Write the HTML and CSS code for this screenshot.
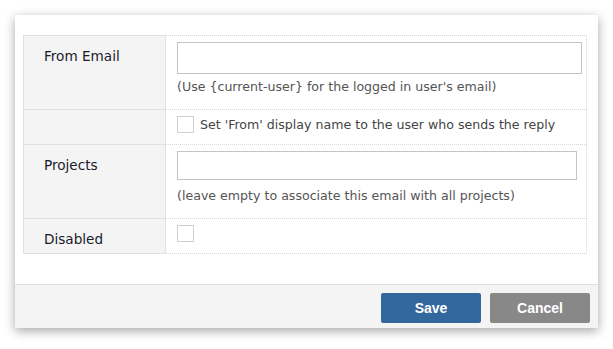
FILE: index.html
```html
<!DOCTYPE html>
<html lang="en">
<head>
  <meta charset="UTF-8">
  <title>Mail settings</title>
  <link rel="stylesheet" href="styles.css">
</head>
<body>

  <div class="dialog">
    <div class="dialog-body">
      <table class="form-table">
        <tr class="row-tall">
          <th>From Email</th>
          <td>
            <input type="text" class="field field-wide">
            <div class="hint">(Use {current-user} for the logged in user's email)</div>
          </td>
        </tr>
        <tr class="row-short">
          <th></th>
          <td>
            <label class="check-line"><span class="checkbox"></span>Set 'From' display name to the user who sends the reply</label>
          </td>
        </tr>
        <tr class="row-tall">
          <th>Projects</th>
          <td>
            <input type="text" class="field field-narrow">
            <div class="hint hint-low">(leave empty to associate this email with all projects)</div>
          </td>
        </tr>
        <tr class="row-short">
          <th>Disabled</th>
          <td>
            <span class="checkbox"></span>
          </td>
        </tr>
      </table>
    </div>

    <div class="dialog-footer">
      <button class="btn btn-save">Save</button>
      <button class="btn btn-cancel">Cancel</button>
    </div>
  </div>

</body>
</html>
```

FILE: styles.css
```css
body {
  margin: 0;
  background-color: white;
  font-family: "DejaVu Sans", Verdana, sans-serif;
}

.dialog {
  margin: 15px;
  width: 583px;
  height: 313px;
  background-color: white;
  box-shadow: 0 3px 10px rgba(0,0,0,0.35);
  display: flex;
  flex-direction: column;
}

.dialog-body {
  flex: 1;
  padding: 20px 11px 0 8px;
}

.form-table {
  width: 564px;
  border-collapse: collapse;
}

.form-table th {
  width: 142px;
  background-color: #f4f4f4;
  border: 1px solid #e0e0e0;
  text-align: left;
  vertical-align: top;
  font-weight: normal;
  font-size: 13.6px;
  color: #1a1a2a;
  padding: 12px 0 0 20px;
  box-sizing: border-box;
}

.form-table td {
  border: 1px dotted #d6d6d6;
  vertical-align: top;
  padding: 6px 0 0 11px;
}

.row-tall {
  height: 74px;
}

.row-short {
  height: 35px;
}

.field {
  display: block;
  height: 32px;
  box-sizing: border-box;
  border: 1px solid #c4c4c4;
  margin: 0;
}

.field-wide {
  width: 405px;
}

.field-narrow {
  width: 400px;
  height: 29px;
}

.hint {
  font-size: 12.6px;
  color: #555;
  margin-top: 5px;
}

.hint-low {
  margin-top: 8px;
}

.check-line {
  display: flex;
  align-items: center;
  gap: 6px;
  font-size: 12.6px;
  color: #444;
}

.checkbox {
  display: inline-block;
  width: 15px;
  height: 15px;
  border: 1px solid #d0d0d0;
  background-color: white;
}

.dialog-footer {
  height: 35px;
  border-top: 1px solid #e0e0e0;
  background-color: #f4f4f4;
  display: flex;
  justify-content: flex-end;
  align-items: flex-start;
  gap: 9px;
  padding: 8px 8px 0 0;
}

.btn {
  width: 100px;
  height: 30px;
  border: none;
  border-radius: 2px;
  color: white;
  font-family: "Liberation Sans", Arial, sans-serif;
  font-weight: bold;
  font-size: 14px;
  cursor: pointer;
}

.btn-save {
  background-color: #33689e;
}

.btn-cancel {
  background-color: #888888;
}
```
